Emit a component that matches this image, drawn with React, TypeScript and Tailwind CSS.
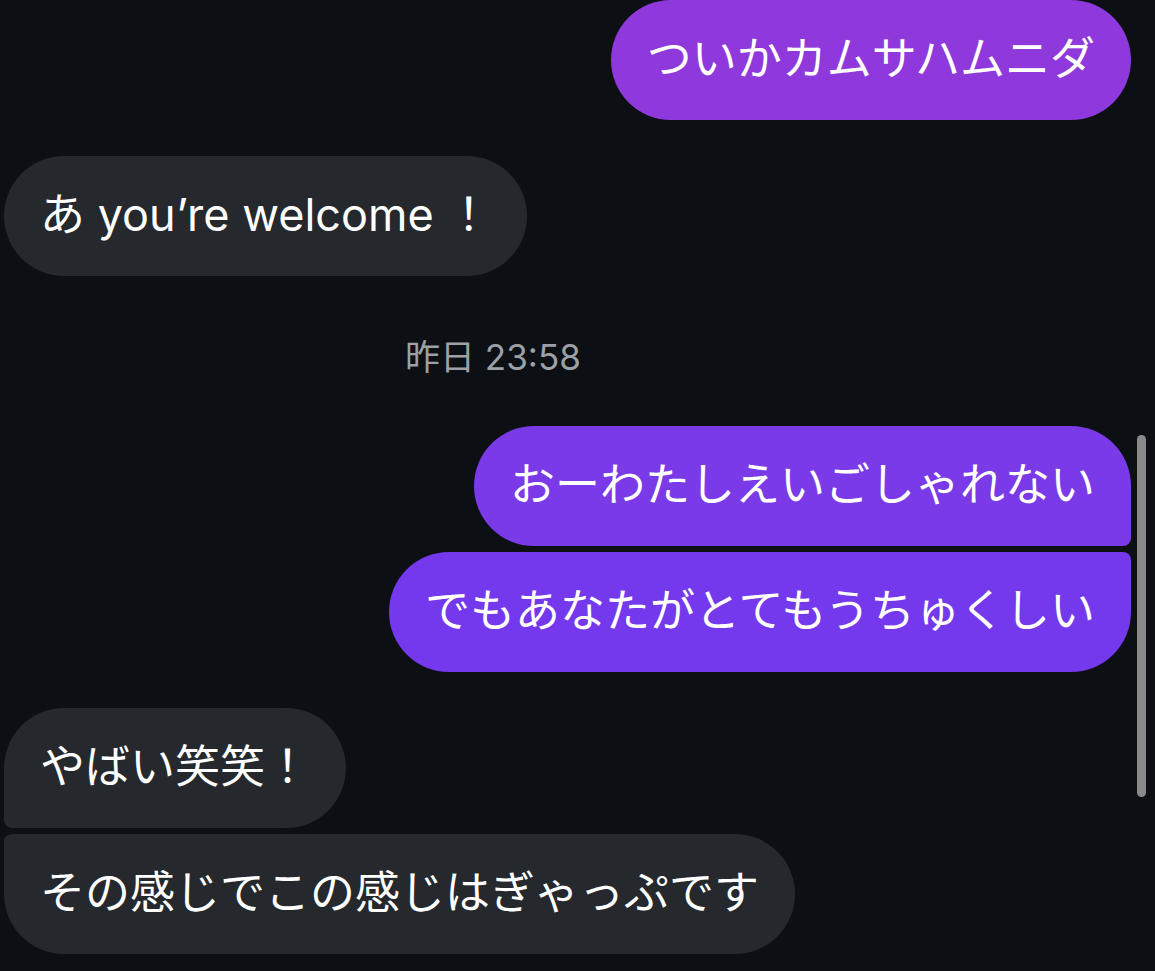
const font = { fontFamily: 'Inter, "Noto Sans CJK JP", sans-serif' };

type Msg = {
  text: string;
  mine: boolean;
  bg: string;
  corners: string;
  mt: string;
};

const messages: Msg[] = [
  { text: 'ついかカムサハムニダ', mine: true, bg: 'bg-[#8f39dc]', corners: 'rounded-[60px]', mt: 'mt-0' },
  { text: 'あ you’re welcome ！', mine: false, bg: 'bg-[#25282c]', corners: 'rounded-[60px]', mt: 'mt-[36px]' },
];

const after: Msg[] = [
  { text: 'おーわたしえいごしゃれない', mine: true, bg: 'bg-[#7a3ae7]', corners: 'rounded-[60px] rounded-br-[8px]', mt: 'mt-0' },
  { text: 'でもあなたがとてもうちゅくしい', mine: true, bg: 'bg-[#7439ec]', corners: 'rounded-[60px] rounded-tr-[8px]', mt: 'mt-[6px]' },
  { text: 'やばい笑笑！', mine: false, bg: 'bg-[#25282c]', corners: 'rounded-[60px] rounded-bl-[8px]', mt: 'mt-[36px]' },
  { text: 'その感じでこの感じはぎゃっぷです', mine: false, bg: 'bg-[#25282c]', corners: 'rounded-[60px] rounded-tl-[8px]', mt: 'mt-[6px]' },
];

const Bubble = ({ m }: { m: Msg }) => (
  <div className={`flex ${m.mine ? 'justify-end pr-[24px]' : 'justify-start pl-[4px]'} ${m.mt}`}>
    <div
      className={`${m.bg} ${m.corners} h-[120px] px-[36px] flex items-center text-white text-[45px] leading-none whitespace-pre`}
    >
      <span className="-mt-[4px]">{m.text}</span>
    </div>
  </div>
);

export default function App() {
  return (
    <div className="relative w-[1155px] h-[971px] bg-[#0c0f14] overflow-hidden" style={font}>
      <div className="flex flex-col">
        {messages.map((m, i) => (
          <Bubble key={i} m={m} />
        ))}
        <div className="h-[150px] flex items-center pl-[405px] pt-[12px]">
          <span className="text-[35px] leading-none text-[#9ca0a7]">昨日 23:58</span>
        </div>
        {after.map((m, i) => (
          <Bubble key={i} m={m} />
        ))}
      </div>
      <div className="absolute left-[1137px] top-[435px] w-[9px] h-[362px] rounded-full bg-[#8a8a8a]" />
    </div>
  );
}
